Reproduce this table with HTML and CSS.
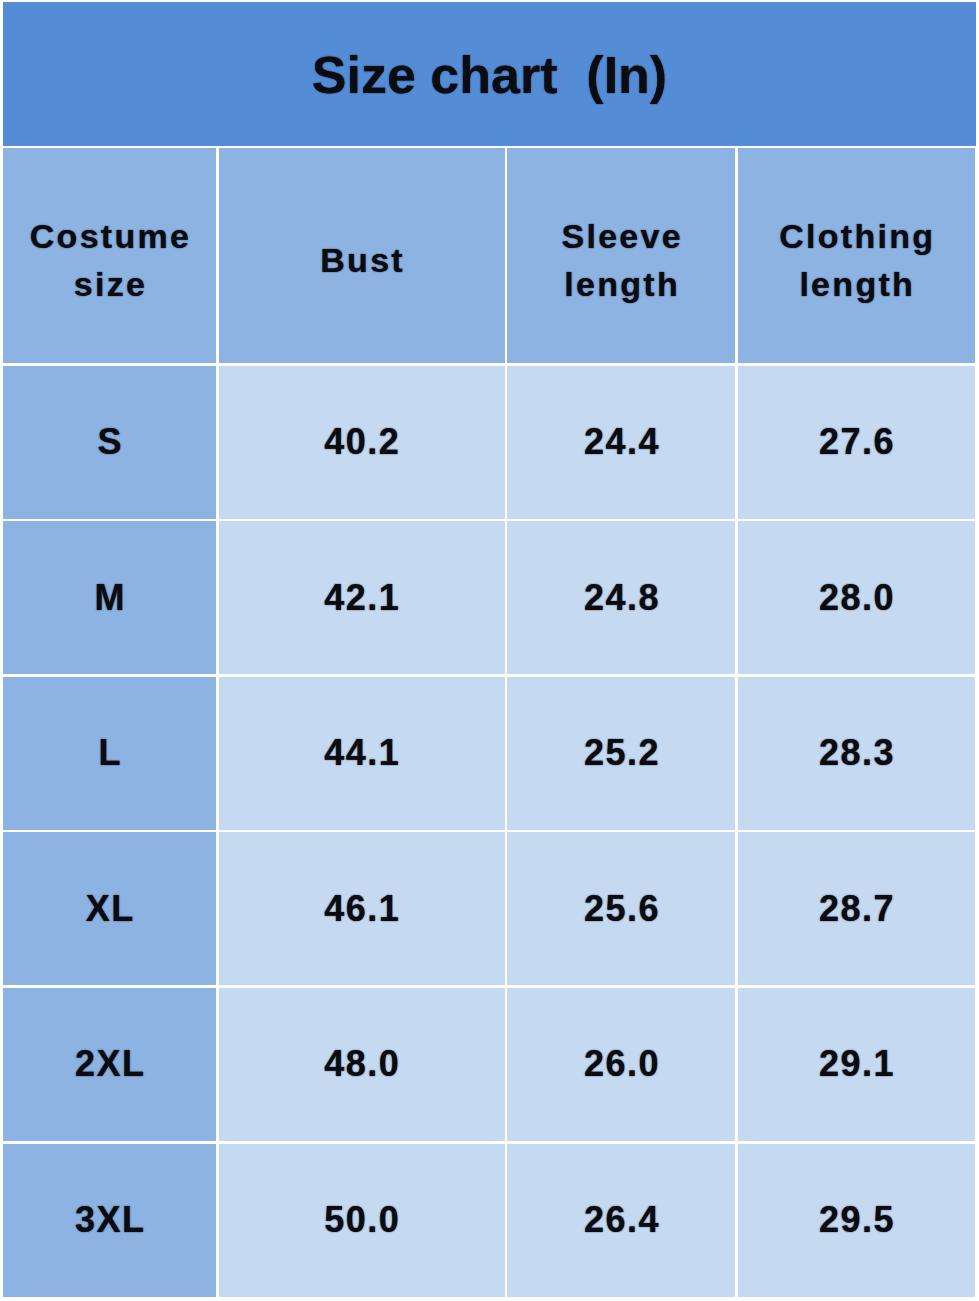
FILE: index.html
```html
<!DOCTYPE html>
<html>
<head>
<meta charset="utf-8">
<link rel="stylesheet" href="styles.css">
</head>
<body>
<div class="chart">
  <div class="title">Size chart&nbsp;&nbsp;(In)</div>
  <div class="grid">
    <div class="cell head"><span>Costume<br>size</span></div>
    <div class="cell head"><span>Bust</span></div>
    <div class="cell head"><span>Sleeve<br>length</span></div>
    <div class="cell head"><span>Clothing<br>length</span></div>

    <div class="cell size">S</div><div class="cell val">40.2</div><div class="cell val">24.4</div><div class="cell val">27.6</div>
    <div class="cell size">M</div><div class="cell val">42.1</div><div class="cell val">24.8</div><div class="cell val">28.0</div>
    <div class="cell size">L</div><div class="cell val">44.1</div><div class="cell val">25.2</div><div class="cell val">28.3</div>
    <div class="cell size">XL</div><div class="cell val">46.1</div><div class="cell val">25.6</div><div class="cell val">28.7</div>
    <div class="cell size">2XL</div><div class="cell val">48.0</div><div class="cell val">26.0</div><div class="cell val">29.1</div>
    <div class="cell size">3XL</div><div class="cell val">50.0</div><div class="cell val">26.4</div><div class="cell val">29.5</div>
  </div>
</div>
</body>
</html>
```

FILE: styles.css
```css
html, body {
  margin: 0;
  padding: 0;
  background: #ffffff;
}

body {
  width: 979px;
  height: 1301px;
  overflow: hidden;
  font-family: "Liberation Sans", Arial, sans-serif;
  font-weight: bold;
  color: #0b0b12;
}

.chart {
  padding: 2px 0 0 3px;
  display: flex;
  flex-direction: column;
  gap: 2px;
}

.title {
  width: 973px;
  height: 144px;
  background: #548dd6;
  display: flex;
  align-items: center;
  justify-content: center;
  font-size: 52px;
  padding-top: 2px;
  box-sizing: border-box;
  text-shadow: 0 0 1.5px rgba(0, 0, 20, 0.8);
}

.grid {
  display: grid;
  grid-template-columns: 213px 286px 228px 237px;
  grid-template-rows: 215px repeat(6, 153px);
  gap: 2.6px;
  background: #ffffff;
}

.cell {
  display: flex;
  align-items: center;
  justify-content: center;
  text-align: center;
  font-size: 36px;
  letter-spacing: 1.5px;
  text-indent: 1.5px;
  text-shadow: 0 0 1.5px rgba(0, 0, 20, 0.8);
}

.head {
  background: #8db3e2;
  font-size: 34px;
  letter-spacing: 2.3px;
  line-height: 48px;
  padding-top: 8px;
  box-sizing: border-box;
  text-indent: 0;
}

.head span {
  padding-left: 2px;
}

.size {
  background: #8db3e2;
}

.val {
  background: #c5d9f1;
}
```
